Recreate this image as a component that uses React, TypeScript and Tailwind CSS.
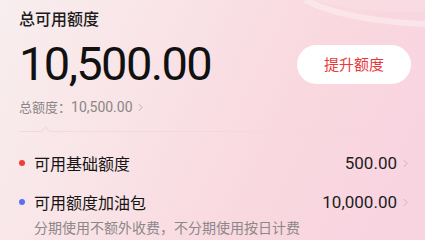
const rows = [
  { dot: "bg-[#f03c3c]", label: "可用基础额度", value: "500.00" },
  { dot: "bg-[#5b6ef5]", label: "可用额度加油包", value: "10,000.00", note: "分期使用不额外收费，不分期使用按日计费" },
];

function Chevron({ className }: { className?: string }) {
  return (
    <svg viewBox="0 0 6 10" className={className} fill="none" stroke="currentColor" strokeWidth="1.1">
      <polyline points="1,1 5,5 1,9" />
    </svg>
  );
}

export default function App() {
  return (
    <div className="relative w-[425px] h-[240px] overflow-hidden bg-[linear-gradient(115deg,#f8eeef_0%,#f9e3e6_35%,#f9d8df_65%,#f8d3e1_100%)] font-['Noto_Sans_CJK_SC',sans-serif] text-[#1c1c1c]">
      {/* soft light swoosh top right */}
      <svg className="absolute right-0 top-0 w-[140px] h-[50px]" viewBox="0 0 140 50" fill="none">
        <path d="M20 0 C50 15 95 22 140 24" stroke="#ffffff" strokeOpacity="0.35" strokeWidth="6" />
        <path d="M30 0 C60 10 100 14 140 12 L140 0 Z" fill="#ffffff" fillOpacity="0.12" />
      </svg>
      <div className="relative pl-[19px] pr-[14px] pt-[8px]">
        <div className="text-[16px] leading-[20px] font-medium">总可用额度</div>
        <div className="mt-[11px] flex items-center justify-between">
          <div className="font-['Roboto',sans-serif] text-[47px] leading-[50px] tracking-[-1.6px] text-[#111]">10,500.00</div>
          <button className="w-[114px] h-[39px] rounded-full bg-white text-[15px] text-[#e83a3e]">提升额度</button>
        </div>
        <div className="mt-[9px] flex items-center text-[13px] leading-[18px] text-[#8a8587]">
          <span>总额度：</span>
          <span className="font-['Roboto',sans-serif] text-[14px]">10,500.00</span>
          <Chevron className="ml-[5px] w-[5px] h-[9px] text-[#b5aeb1]" />
        </div>
        <div className="relative mt-[15px] mr-[1px] border-t border-[#f2d9df]">
          <div className="absolute left-[23px] top-[-4px] w-[7px] h-[7px] rotate-45 border-l border-t border-[#f2d9df] bg-[#f8e6ea]" />
        </div>
        <div className="mt-[17px] flex flex-col gap-[11px]">
          {rows.map((r) => (
            <div key={r.label}>
              <div className="flex items-center h-[28px]">
                <span className={`w-[6px] h-[6px] rounded-full ${r.dot}`} />
                <span className="ml-[9px] text-[16px] leading-[22px] text-[#151515]">{r.label}</span>
                <span className="ml-auto font-['Roboto',sans-serif] text-[17px] leading-[22px]">{r.value}</span>
                <Chevron className="ml-[6px] mr-[3px] w-[5px] h-[9px] text-[#bbb2b6]" />
              </div>
              {r.note && (
                <div className="ml-[15px] mt-[2px] text-[14px] leading-[18px] text-[#8d8789]">{r.note}</div>
              )}
            </div>
          ))}
        </div>
      </div>
    </div>
  );
}
